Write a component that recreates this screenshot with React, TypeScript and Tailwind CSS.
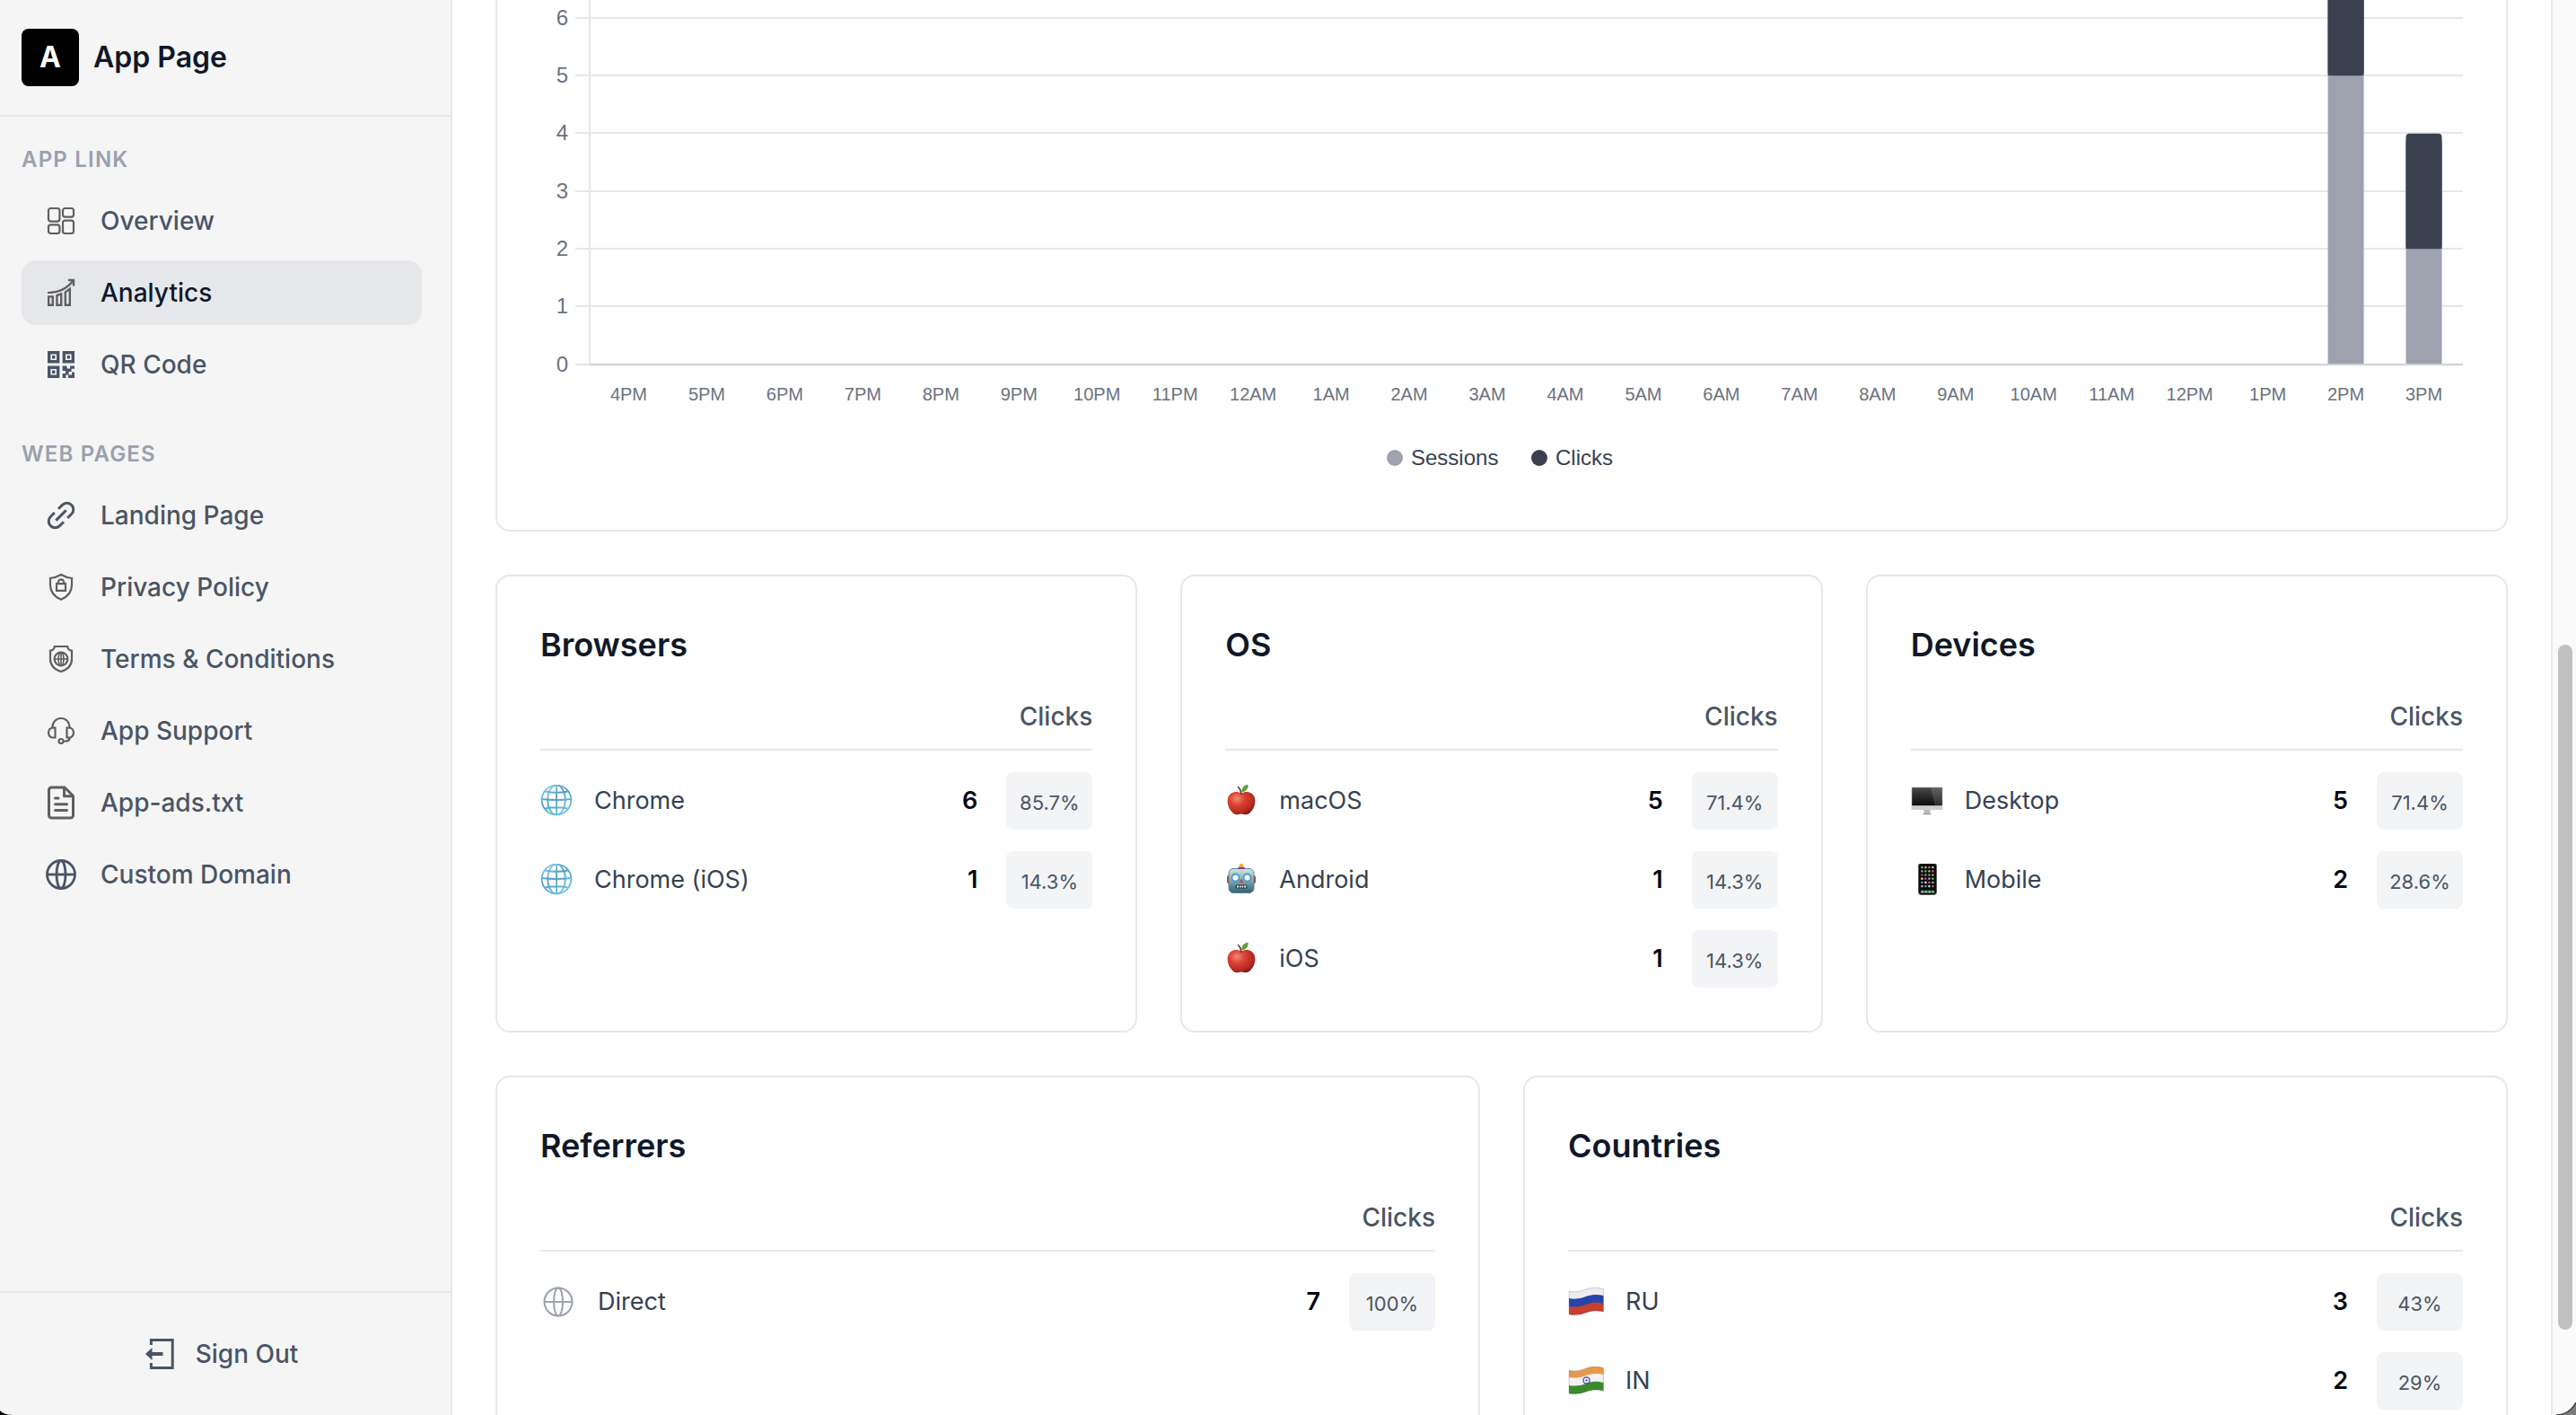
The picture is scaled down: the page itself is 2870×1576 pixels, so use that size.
import type { ReactNode } from "react";

type Row = { icon: ReactNode; label: string; clicks: number; share: string };

function NavSvg({ children, className = "text-[#5f5f5f]" }: { children: ReactNode; className?: string }) {
  return (
    <svg
      viewBox="0 0 40 40"
      className={`h-10 w-10 shrink-0 ${className}`}
      fill="none"
      stroke="currentColor"
      strokeWidth="2.2"
      aria-hidden="true"
    >
      {children}
    </svg>
  );
}

function OverviewIcon() {
  return (
    <NavSvg>
      <rect x="6" y="6" width="12.4" height="14.6" rx="2.5" />
      <rect x="22" y="6" width="12" height="9.6" rx="2.5" />
      <rect x="6" y="24.4" width="12.4" height="9.6" rx="2.5" />
      <rect x="22" y="19.6" width="12" height="14.4" rx="2.5" />
    </NavSvg>
  );
}

function AnalyticsIcon() {
  return (
    <NavSvg>
      <path d="M5 20C17 20 26 16.5 33.5 6.5" />
      <path d="M28 6h6v6.5" strokeWidth="2.4" />
      <path d="M6.2 24.4h4.6v9.4H6.2zM15.4 23l4.8-1.6v12.4h-4.8zM24.8 19.4l5-3.6v18h-5z" strokeWidth="2.4" />
    </NavSvg>
  );
}

function QrIcon() {
  return (
    <NavSvg className="text-gray-600">
      <path d="M6.7 6.7h10v10h-10zM23.3 6.7h10v10h-10zM6.7 23.3h10v10h-10z" strokeWidth="3.4" />
      <path
        stroke="none"
        fill="currentColor"
        d="M10 10h3.4v3.4H10zM26.6 10H30v3.4h-3.4zM10 26.6h3.4V30H10zM21.6 21.6h5v3h3.4v-3h5v3.2h-3.4v3.2h-3v3.4h3.4v-3H35V35h-7v-3.4h-2.6V35h-3.8v-5h3.4v-3h-3.4z"
      />
    </NavSvg>
  );
}

function LinkIcon() {
  return (
    <NavSvg className="text-gray-600">
      <g transform="rotate(-45 20 20)" strokeWidth="3">
        <path d="M17 12.8h-6.3a7.2 7.2 0 0 0 0 14.4H17M23 12.8h6.3a7.2 7.2 0 0 1 0 14.4H23M12 20h16" />
      </g>
    </NavSvg>
  );
}

function PrivacyIcon() {
  return (
    <NavSvg>
      <path d="M20 6c-3.4 2-7.4 3.6-12 4v7.5c0 7.5 4.5 13 12 16.3 7.5-3.3 12-8.8 12-16.3V10c-4.6-.4-8.6-2-12-4z" />
      <path d="M15 16.2h10v7.6H15z" />
      <path d="M16.8 16v-1.4a3.2 3.2 0 0 1 6.4 0V16" />
    </NavSvg>
  );
}

function TermsIcon() {
  return (
    <NavSvg>
      <path d="M12.8 6h14.4c.2 2.8 1.6 4.4 4.8 4.7V20c0 7-4.5 11.5-12 14-7.500-2.500-12-7-12-14v-9.300c3.200-.3 4.600-1.900 4.800-4.700z" />
      <circle cx="20" cy="20" r="7.4" />
      <ellipse cx="20" cy="20" rx="3" ry="7.4" strokeWidth="1.6" />
      <path d="M12.6 20h14.8M20 12.6v14.8" strokeWidth="1.6" />
    </NavSvg>
  );
}

function SupportIcon() {
  return (
    <NavSvg>
      <path d="M10.5 17.5v-2a9.5 9.5 0 0 1 19 0v2" />
      <path d="M13.5 16.5v11H11a5 5.5 0 0 1 0-11zM26.5 16.5v11H29a5 5.5 0 0 0 0-11z" />
      <circle cx="20" cy="31.5" r="2.5" />
      <path d="M22.5 31.5H25c2.8 0 4.5-1.5 4.8-4" />
    </NavSvg>
  );
}

function AdsIcon() {
  return (
    <NavSvg>
      <g strokeWidth="3" strokeLinejoin="round" strokeLinecap="round">
        <path d="M24 3H9.5a3 3 0 0 0-3 3v28a3 3 0 0 0 3 3h21a3 3 0 0 0 3-3V12.5z" />
        <path d="M23.5 4v8.8h9" />
        <path d="M13.5 15H17M13.5 21.8h13M13.5 28.4h13" />
      </g>
    </NavSvg>
  );
}

function GlobeIcon({ className, strokeWidth = 2.8 }: { className?: string; strokeWidth?: number }) {
  return (
    <NavSvg className={className}>
      <g strokeWidth={strokeWidth}>
        <circle cx="20" cy="20" r="15.5" />
        <ellipse cx="20" cy="20" rx="5" ry="15.5" />
        <path d="M4.5 20h31" />
      </g>
    </NavSvg>
  );
}

function Emoji({ children, className = "h-9 w-9" }: { children: ReactNode; className?: string }) {
  return (
    <svg viewBox="0 1 36 36" className={`shrink-0 ${className}`} fill="none" aria-hidden="true">
      {children}
    </svg>
  );
}

function WebEmoji() {
  return (
    <Emoji>
      <defs>
        <linearGradient id="web" x1="0" y1="0" x2="0.6" y2="1">
          <stop offset="0" stopColor="#8fd6ee" />
          <stop offset="0.5" stopColor="#4f9cc4" />
          <stop offset="1" stopColor="#6cc0e2" />
        </linearGradient>
      </defs>
      <g stroke="url(#web)" strokeWidth="1.8">
        <circle cx="18" cy="18" r="16.4" />
        <ellipse cx="18" cy="18" rx="9.8" ry="16.4" />
        <path d="M18 1.6l.1 32.8M5.4 8.5Q18 11 30.600 8.500M5.400 27.500Q18 25 30.600 27.500M1.700 17Q18 19 34.300 17" />
      </g>
    </Emoji>
  );
}

function AppleEmoji() {
  return (
    <Emoji>
      <defs>
        <radialGradient id="apple" cx="0.34" cy="0.3" r="0.8">
          <stop offset="0" stopColor="#f08a78" />
          <stop offset="0.35" stopColor="#dc4233" />
          <stop offset="0.75" stopColor="#b42a22" />
          <stop offset="1" stopColor="#74170f" />
        </radialGradient>
      </defs>
      <path
        fill="url(#apple)"
        d="M18 10.5c3-1.8 8-2.4 11.5.2 5.5 4 4.5 12.8 1 18-2.800 4.300-6.200 6.600-9.500 5.300-2-.7-4-.7-6 0-3.300 1.300-6.700-1-9.500-5.300-3.500-5.200-4.500-14 1-18 3.500-2.600 8.500-2 11.500-.2z"
      />
      <path d="M18 11.5c-.2-3.5-1.4-6-3.5-8" stroke="#6b4226" strokeWidth="1.6" strokeLinecap="round" />
      <path d="M18.5 9c-.5-4 2-7.500 7-8.600.6 4.400-2 8.300-7 8.600z" fill="#5fa03a" />
    </Emoji>
  );
}

function RobotEmoji() {
  return (
    <Emoji>
      <defs>
        <linearGradient id="robot" x1="0" y1="0" x2="0" y2="1">
          <stop offset="0" stopColor="#d4e6e6" />
          <stop offset="0.5" stopColor="#7fa6ad" />
          <stop offset="1" stopColor="#2f6274" />
        </linearGradient>
      </defs>
      <rect x="2" y="14" width="32" height="9" rx="2" fill="#b83c30" />
      <rect x="4" y="6.5" width="28" height="27" rx="5" fill="url(#robot)" stroke="#5c8791" />
      <path d="M14 7c0-2 1.5-3 4-3s4 1 4 3z" fill="#6d4a8e" />
      <circle cx="18" cy="2.8" r="2.3" fill="#f0b03c" />
      <circle cx="11.5" cy="16.5" r="4" fill="#fff" stroke="#3f9ec9" strokeWidth="1.8" />
      <circle cx="24.5" cy="16.5" r="4" fill="#fff" stroke="#3f9ec9" strokeWidth="1.8" />
      <path d="M18 17.5l2.5 4.5h-5z" fill="#d3483a" />
      <rect x="11.5" y="24.5" width="13" height="4" rx="1.5" fill="#23343c" />
      <path d="M13 26.5h2M16 26.5h1.6M18.6 26.5h1.6M21.2 26.5h2" stroke="#fff" strokeWidth="2.2" />
    </Emoji>
  );
}

function DesktopEmoji() {
  return (
    <Emoji>
      <defs>
        <linearGradient id="desk" x1="0" y1="0" x2="0" y2="1">
          <stop offset="0" stopColor="#4a4a4a" />
          <stop offset="1" stopColor="#0a0a0a" />
        </linearGradient>
      </defs>
      <path d="M14.5 28h7v5.5h-7z" fill="#b9b9bc" />
      <path d="M13.500 33h9v1.200h-9z" fill="#9a9a9d" />
      <rect x="0.5" y="3.5" width="35" height="25.5" rx="1" fill="#cfcfd2" />
      <rect x="1.2" y="4.2" width="33.6" height="20" fill="url(#desk)" />
      <path d="M22 4.2h12.8v20H27z" fill="#fff" opacity="0.14" />
    </Emoji>
  );
}

const appColors = ["#5fd068", "#e8e8e8", "#e05fb0", "#8fb8f0", "#4fa6e8", "#f0c04a", "#e0603c", "#c8c8c8"];

function PhoneEmoji() {
  return (
    <Emoji>
      <rect x="8.5" y="0.500" width="20" height="35" rx="3" fill="#0b0b0c" stroke="#5a5a5e" />
      {[0, 1, 2, 3, 4, 5].map((row) =>
        [0, 1, 2, 3].map((col) => (
          <rect
            key={`${row}-${col}`}
            x={11.3 + col * 4}
            y={4 + row * 4.2}
            width="2.2"
            height="2.2"
            rx="0.6"
            fill={appColors[(row * 3 + col * 5) % appColors.length]}
          />
        )),
      )}
      <rect x="10.5" y="30.5" width="16" height="3.4" rx="1" fill="#3c4a44" />
      <path d="M11.5 32.2h2.6M15.5 32.2h2.6M19.5 32.2h2.6M23.4 32.2h2.2" stroke="#7fe08a" strokeWidth="2" />
    </Emoji>
  );
}

function FlagEmoji({ top, middle, bottom, wheel }: { top: string; middle: string; bottom: string; wheel?: boolean }) {
  return (
    <Emoji className="h-10 w-10">
      <g transform="translate(0 1)">
        <path d="M1 7.5C9 9 14 7 19 5.2S30 3.5 35.5 5v9.5c-5.5-1.5-11.5-1.3-16.5.5S9 17.5 1 16z" fill={top} />
        <path d="M1 14.5c8 1.5 13-.5 18-2.3s11-2 16.5-.5v10c-5.5-1.5-11.500-1.300-16.500.5S9 24.500 1 23z" fill={middle} />
        <path d="M1 22.500c8 1.500 13-.5 18-2.300s11-2 16.500-.5V28c-5.500-1.500-11.500-1.300-16.500.5S9 32 1 30.500z" fill={bottom} />
        <path
          d="M1 7.500C9 9 14 7 19 5.200S30 3.500 35.500 5v23c-5.500-1.500-11.500-1.300-16.500.5S9 32 1 30.500z"
          stroke="#000"
          strokeOpacity="0.15"
        />
        {wheel && (
          <>
            <circle cx="18.5" cy="17.5" r="3.2" stroke="#3a3f9e" strokeWidth="1.1" />
            <circle cx="18.5" cy="17.5" r="1" fill="#3a3f9e" />
          </>
        )}
      </g>
    </Emoji>
  );
}

const appLinks = [
  { label: "Overview", icon: <OverviewIcon /> },
  { label: "Analytics", icon: <AnalyticsIcon />, active: true },
  { label: "QR Code", icon: <QrIcon /> },
];

const webPages = [
  { label: "Landing Page", icon: <LinkIcon /> },
  { label: "Privacy Policy", icon: <PrivacyIcon /> },
  { label: "Terms & Conditions", icon: <TermsIcon /> },
  { label: "App Support", icon: <SupportIcon /> },
  { label: "App-ads.txt", icon: <AdsIcon /> },
  { label: "Custom Domain", icon: <GlobeIcon className="text-gray-600" /> },
];

const browsers: Row[] = [
  { icon: <WebEmoji />, label: "Chrome", clicks: 6, share: "85.7%" },
  { icon: <WebEmoji />, label: "Chrome (iOS)", clicks: 1, share: "14.3%" },
];

const systems: Row[] = [
  { icon: <AppleEmoji />, label: "macOS", clicks: 5, share: "71.4%" },
  { icon: <RobotEmoji />, label: "Android", clicks: 1, share: "14.3%" },
  { icon: <AppleEmoji />, label: "iOS", clicks: 1, share: "14.3%" },
];

const devices: Row[] = [
  { icon: <DesktopEmoji />, label: "Desktop", clicks: 5, share: "71.4%" },
  { icon: <PhoneEmoji />, label: "Mobile", clicks: 2, share: "28.6%" },
];

const referrers: Row[] = [
  { icon: <GlobeIcon className="text-gray-400" strokeWidth={2} />, label: "Direct", clicks: 7, share: "100%" },
];

const countries: Row[] = [
  { icon: <FlagEmoji top="#ececec" middle="#2745a8" bottom="#c8402f" />, label: "RU", clicks: 3, share: "43%" },
  { icon: <FlagEmoji top="#e8984a" middle="#f2f2f2" bottom="#3c8a2e" wheel />, label: "IN", clicks: 2, share: "29%" },
];

const hours = [
  "4PM", "5PM", "6PM", "7PM", "8PM", "9PM", "10PM", "11PM", "12AM", "1AM", "2AM", "3AM",
  "4AM", "5AM", "6AM", "7AM", "8AM", "9AM", "10AM", "11AM", "12PM", "1PM", "2PM", "3PM",
];

const sessions: Record<string, number> = { "2PM": 5, "3PM": 2 };
const clicks: Record<string, number> = { "2PM": 2, "3PM": 2 };

function NavSection({ title, items }: { title: string; items: { label: string; icon: ReactNode; active?: boolean }[] }) {
  return (
    <section>
      <h2 className="mb-4 text-[24px] leading-8 font-semibold tracking-wider text-gray-400 uppercase">{title}</h2>
      <ul className="space-y-2">
        {items.map((item) => (
          <li key={item.label}>
            <a
              href="#"
              aria-current={item.active ? "page" : undefined}
              className={`flex h-18 items-center gap-6 rounded-2xl px-6 text-[28px] font-medium ${
                item.active ? "bg-gray-200 text-gray-900" : "text-gray-600"
              }`}
            >
              {item.icon}
              {item.label}
            </a>
          </li>
        ))}
      </ul>
    </section>
  );
}

function Sidebar() {
  return (
    <aside className="flex w-[504px] shrink-0 flex-col border-r-2 border-gray-200 bg-[#f5f5f5]">
      <div className="flex items-center gap-4 border-b-2 border-gray-200 px-6 py-8">
        <div className="flex h-16 w-16 items-center justify-center rounded-lg bg-black text-[32px] font-bold text-white">
          A
        </div>
        <span className="text-[32px] font-semibold text-gray-900">App Page</span>
      </div>
      <nav className="flex-1 space-y-12 py-8 pr-8 pl-6">
        <NavSection title="App Link" items={appLinks} />
        <NavSection title="Web Pages" items={webPages} />
      </nav>
      <div className="border-t-2 border-gray-200 py-8 pr-8 pl-6">
        <button
          type="button"
          className="flex h-18 w-full items-center justify-center gap-6 rounded-2xl text-[28px] font-medium text-gray-600"
        >
          <svg viewBox="0 0 32 36" className="h-9 w-8" fill="none" stroke="currentColor" strokeWidth="3" aria-hidden="true">
            <path d="M6.4 8V2.500h23.800v31H6.400V28" />
            <path d="M6 18h13.5" strokeWidth="4" />
            <path d="M0 18l7.5-7v14z" fill="currentColor" stroke="none" />
          </svg>
          Sign Out
        </button>
      </div>
    </aside>
  );
}

function SessionsChart() {
  const left = 55;
  const right = 2142;
  const base = 406;
  const unit = 64.3;
  const step = (right - left) / hours.length;

  return (
    <svg
      viewBox="0 0 2142 542"
      className="block h-auto w-full font-['Liberation_Sans',Arial,sans-serif]"
      role="img"
      aria-label="Sessions and clicks per hour"
    >
      {[0, 1, 2, 3, 4, 5, 6].map((n) => (
        <g key={n}>
          <rect x={left - 16} y={Math.floor(base - n * unit) - 1} width={right - left + 16} height="2" fill="#e5e7eb" />
          <text x="31" y={Math.floor(base - n * unit) + 8} fontSize="24" textAnchor="end" fill="#6b7280">
            {n}
          </text>
        </g>
      ))}
      <rect x={left - 1} y="0" width="2" height={base} fill="#e5e7eb" />
      {hours.map((hour, i) => {
        const center = left + step * (i + 0.5);
        const s = (sessions[hour] ?? 0) * unit;
        const c = (clicks[hour] ?? 0) * unit;
        return (
          <g key={hour}>
            {s > 0 && (
              <>
                <rect x={center - 20} y={base - s - c} width="40" height={c} rx="4" fill="#3a404e" />
                <rect x={center - 20} y={base - s - c + 8} width="40" height={c - 8} fill="#3a404e" />
                <rect x={center - 20} y={base - s} width="40" height={s} fill="#9ea2ae" />
              </>
            )}
            <text x={center} y="446" fontSize="20" textAnchor="middle" fill="#6b7280">
              {hour}
            </text>
          </g>
        );
      })}
      <rect x={left} y={base - 1} width={right - left} height="2" fill="#cfd1d7" />
      <g fontSize="24" fill="#374151">
        <circle cx="952" cy="510" r="9" fill="#9ea2ae" />
        <text x="970" y="518">Sessions</text>
        <circle cx="1113" cy="510" r="9" fill="#3a404e" />
        <text x="1131" y="518">Clicks</text>
      </g>
    </svg>
  );
}

function StatCard({ title, rows }: { title: string; rows: Row[] }) {
  return (
    <section className="rounded-2xl border-2 border-gray-200 bg-white p-12">
      <h2 className="mb-8 text-[36px] leading-[56px] font-semibold text-gray-900">{title}</h2>
      <table className="w-full border-separate border-spacing-0">
        <thead>
          <tr className="text-[28px] leading-10 text-gray-600">
            <th className="border-b-2 border-gray-200 p-0" aria-label={title} />
            <th colSpan={2} scope="col" className="border-b-2 border-gray-200 p-0 pb-4 text-right font-medium">
              Clicks
            </th>
          </tr>
        </thead>
        <tbody>
          {rows.map((row) => (
            <tr key={row.label} className="text-[27px]">
              <td className="p-0 pt-6">
                <div className="flex items-center gap-6 text-gray-700">
                  {row.icon}
                  {row.label}
                </div>
              </td>
              <td className="p-0 pt-6 pr-8 text-right font-semibold text-gray-950">{row.clicks}</td>
              <td className="w-24 p-0 pt-6">
                <div className="flex h-16 w-24 items-center justify-center rounded-lg bg-gray-100 pt-1 text-[22px] text-gray-600">
                  {row.share}
                </div>
              </td>
            </tr>
          ))}
        </tbody>
      </table>
    </section>
  );
}

export default function App() {
  return (
    <div className="relative flex h-screen overflow-hidden bg-white font-['Inter','Liberation_Sans',sans-serif]">
      <Sidebar />
      <main className="min-w-0 flex-1 space-y-12 overflow-hidden px-12">
        <section className="rounded-b-2xl border-2 border-t-0 border-gray-200 bg-white px-12 pb-12">
          <SessionsChart />
        </section>
        <div className="grid grid-cols-3 gap-12">
          <StatCard title="Browsers" rows={browsers} />
          <StatCard title="OS" rows={systems} />
          <StatCard title="Devices" rows={devices} />
        </div>
        <div className="grid grid-cols-2 gap-12">
          <StatCard title="Referrers" rows={referrers} />
          <StatCard title="Countries" rows={countries} />
        </div>
      </main>

      {/* Scroll track */}
      <div className="flex w-7 shrink-0 flex-col border-l-2 border-[#e8e8e8] bg-[#fafafa] px-1.5">
        <div className="grow-[718]" />
        <div className="w-4 grow-[763] rounded-full bg-[#c1c1c1]" />
        <div className="grow-[95]" />
      </div>

      {/* Window corners */}
      <svg viewBox="0 0 14 5" className="absolute bottom-0 left-0 h-[5px] w-[14px]" aria-hidden="true">
        <path d="M0 0C3 3.5 8 4.8 14 5H0z" fill="#000" />
      </svg>
      <svg viewBox="0 0 22 14" className="absolute right-0 bottom-0 h-[14px] w-[22px]" aria-hidden="true">
        <path d="M22 0v14H0C10 14 17 9 22 0z" fill="#7d7d7d" />
        <path d="M0 14C10 14 17 9 22 0" fill="none" stroke="#3d3d3d" strokeWidth="1.5" />
      </svg>
    </div>
  );
}
